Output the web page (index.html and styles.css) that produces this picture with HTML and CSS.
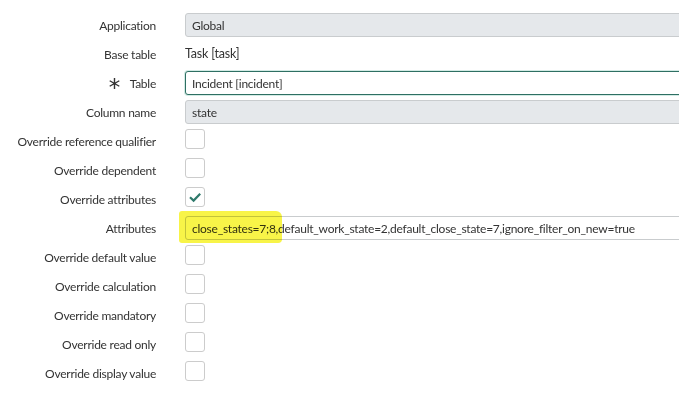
FILE: index.html
```html
<!DOCTYPE html>
<html lang="en">
<head>
  <meta charset="UTF-8">
  <meta name="viewport" content="width=device-width, initial-scale=1.0">
  <title>Dictionary Override</title>
  <link rel="stylesheet" href="styles.css">
</head>
<body>
  <form class="form">
    <label class="label">Application</label>
    <div class="field"><input class="input readonly" value="Global" readonly></div>

    <label class="label">Base table</label>
    <div class="field text">Task [task]</div>

    <label class="label"><span class="mandatory"><svg width="11" height="11" viewBox="0 0 11 11"><path d="M5.5 0v11M0.7 2.75l9.6 5.5M0.7 8.25l9.6-5.5" stroke="#333" stroke-width="1.4" fill="none"/></svg></span>Table</label>
    <div class="field"><input class="input focused" value="Incident [incident]"></div>

    <label class="label">Column name</label>
    <div class="field"><input class="input readonly" value="state" readonly></div>

    <label class="label">Override reference qualifier</label>
    <div class="field"><span class="checkbox"></span></div>

    <label class="label">Override dependent</label>
    <div class="field"><span class="checkbox"></span></div>

    <label class="label">Override attributes</label>
    <div class="field"><span class="checkbox"><svg width="20" height="20" viewBox="0 0 20 20"><path d="M5 10.2l3.6 3.4L15.2 6.8" stroke="#2f7a6c" stroke-width="2.2" fill="none"/></svg></span></div>

    <label class="label">Attributes</label>
    <div class="field">
      <input class="input" value="close_states=7;8,default_work_state=2,default_close_state=7,ignore_filter_on_new=true">
      <!-- marker drawn over the screenshot -->
      <span class="marker"></span>
    </div>

    <label class="label">Override default value</label>
    <div class="field"><span class="checkbox"></span></div>

    <label class="label">Override calculation</label>
    <div class="field"><span class="checkbox"></span></div>

    <label class="label">Override mandatory</label>
    <div class="field"><span class="checkbox"></span></div>

    <label class="label">Override read only</label>
    <div class="field"><span class="checkbox"></span></div>

    <label class="label">Override display value</label>
    <div class="field"><span class="checkbox"></span></div>
  </form>
</body>
</html>
```

FILE: styles.css
```css
:root {
  font-family: Lato, "Open Sans", sans-serif;
  font-size: 12px;
  letter-spacing: -0.25px;
  color: #333;
}
*, ::before, ::after {
  box-sizing: border-box;
}
html, body {
  overflow: hidden;
}
body {
  margin: 0;
  background: #fff;
}
.form {
  display: grid;
  grid-template-columns: 156px 1fr;
  grid-auto-rows: 24px;
  column-gap: 29px;
  row-gap: 5px;
  padding-top: 13px;
}
.label {
  display: flex;
  align-items: center;
  justify-content: flex-end;
  white-space: nowrap;
  padding-top: 1px;
}
.mandatory {
  display: inline-flex;
  margin-right: 10px;
}
.field {
  position: relative;
}
.field.text {
  display: flex;
  align-items: center;
  font-size: 12.5px;
  letter-spacing: -0.2px;
  height: 25px;
  padding-bottom: 2px;
}
/* the form runs on past the right edge of the window */
.input {
  display: block;
  width: calc(100% + 8px);
  height: 24px;
  padding: 0 6px;
  font: inherit;
  letter-spacing: inherit;
  color: #333;
  background: #fff;
  border: 1px solid #c9ccce;
  border-radius: 3px;
  outline: none;
}
.input.readonly {
  background: #e5e8eb;
}
.input.focused {
  border-color: #2e6f63;
  box-shadow: 0 0 0 1px #d3ebe5;
}
.checkbox {
  display: block;
  width: 20px;
  height: 20px;
  border: 1px solid #cccccc;
  border-radius: 3px;
  background: #fff;
}
.checkbox svg {
  display: block;
  margin: -1px;
}
.marker {
  position: absolute;
  left: -6px;
  top: -5px;
  width: 103px;
  height: 32px;
  background: #f8f448;
  border-radius: 3px 6px 4px 3px;
  mix-blend-mode: multiply;
}
```
